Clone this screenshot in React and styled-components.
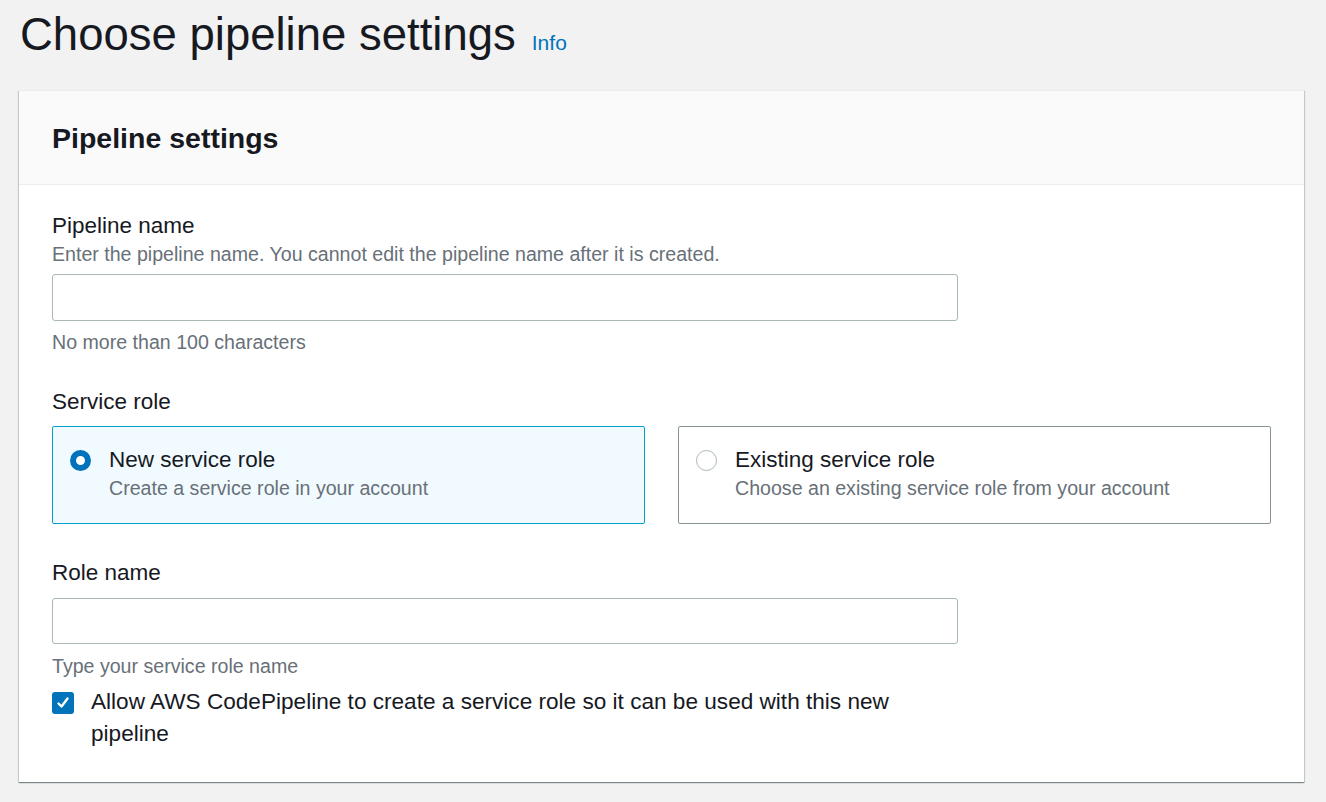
import React, { useState } from "react";
import styled, { createGlobalStyle } from "styled-components";

const GlobalStyle = createGlobalStyle`
    html, body {
        margin: 0;
        padding: 0;
        background: #f2f2f2;
    }
    body {
        font-family: "Liberation Sans", Arial, sans-serif;
        color: #16191f;
    }
    * {
        box-sizing: border-box;
    }
`;

const Page = styled.div`
    padding: 7px 22px 20px 19px;
    min-height: 802px;
`;

const TitleRow = styled.div`
    display: flex;
    align-items: baseline;
    gap: 16px;
    margin-bottom: 27px;
`;

const Title = styled.h1`
    margin: 0 0 0 1px;
    font-size: 45.5px;
    line-height: 56px;
    font-weight: 400;
    color: #16191f;
`;

const InfoLink = styled.a`
    font-size: 21px;
    color: #0073bb;
    text-decoration: none;
    cursor: pointer;
`;

const Card = styled.section`
    background: #ffffff;
    box-shadow: 0 1px 1px 0 rgba(0, 28, 36, 0.3), 1px 1px 1px 0 rgba(0, 28, 36, 0.15),
        -1px 1px 1px 0 rgba(0, 28, 36, 0.15);
`;

const CardHeader = styled.div`
    height: 95px;
    display: flex;
    align-items: center;
    padding: 0 33px;
    background: #fafafa;
    border-bottom: 1px solid #eaeded;
    border-top: 1px solid #eaeded;

    h2 {
        margin: 0;
        font-size: 28.5px;
        font-weight: 700;
        line-height: 36px;
    }
`;

const CardBody = styled.div`
    padding: 27px 33px 32px;
`;

const Field = styled.div`
    display: flex;
    flex-direction: column;
    margin-top: ${({ top }) => top || 0}px;
`;

const Label = styled.label`
    font-size: 22.5px;
    line-height: 28px;
`;

const Hint = styled.div`
    font-size: 19.6px;
    line-height: 28px;
    color: #687078;
    margin-top: ${({ top }) => top || 0}px;
`;

const TextInput = styled.input`
    width: 906px;
    height: ${({ h }) => h || 47}px;
    margin-top: ${({ top }) => top || 0}px;
    border: 1px solid #aab7b8;
    border-radius: 3px;
    background: #fff;
    padding: 0 14px;
    font: inherit;
    font-size: 20px;
    outline: none;
`;

const Tiles = styled.div`
    display: grid;
    grid-template-columns: 1fr 1fr;
    gap: 33px;
    margin-top: 10px;
`;

const Tile = styled.div`
    height: 98px;
    display: flex;
    align-items: flex-start;
    gap: 18px;
    padding: 19px 17px 0;
    border: 1px solid ${({ selected }) => (selected ? "#00a1c9" : "#879596")};
    background: ${({ selected }) => (selected ? "#f1faff" : "#ffffff")};
    border-radius: 2px;
    cursor: pointer;
`;

const Radio = styled.span`
    flex: none;
    width: 21px;
    height: 21px;
    margin-top: 4px;
    border-radius: 50%;
    border: ${({ checked }) => (checked ? "6px solid #0073bb" : "1.5px solid #aab7b8")};
    background: #fff;
`;

const TileText = styled.div`
    display: flex;
    flex-direction: column;
`;

const CheckRow = styled.div`
    display: flex;
    align-items: flex-start;
    gap: 17px;
    margin-top: 6px;
    width: 880px;
`;

const CheckBox = styled.span`
    flex: none;
    width: 22px;
    height: 22px;
    margin-top: 6px;
    border-radius: 3px;
    background: #0073bb;
    display: flex;
    align-items: center;
    justify-content: center;
`;

const CheckText = styled.span`
    font-size: 22.6px;
    line-height: 32px;
`;

const roles = [
    { id: "new", title: "New service role", desc: "Create a service role in your account" },
    { id: "existing", title: "Existing service role", desc: "Choose an existing service role from your account" },
];

const App = () => {
    const [role, setRole] = useState("new");

    return (
        <Page>
            <GlobalStyle />
            <TitleRow>
                <Title>Choose pipeline settings</Title>
                <InfoLink>Info</InfoLink>
            </TitleRow>
            <Card>
                <CardHeader>
                    <h2>Pipeline settings</h2>
                </CardHeader>
                <CardBody>
                    <Field>
                        <Label>Pipeline name</Label>
                        <Hint>Enter the pipeline name. You cannot edit the pipeline name after it is created.</Hint>
                        <TextInput top={6} />
                        <Hint top={7}>No more than 100 characters</Hint>
                    </Field>

                    <Field top={32}>
                        <Label>Service role</Label>
                        <Tiles>
                            {roles.map(r => (
                                <Tile key={r.id} selected={role === r.id} onClick={() => setRole(r.id)}>
                                    <Radio checked={role === r.id} />
                                    <TileText>
                                        <Label>{r.title}</Label>
                                        <Hint>{r.desc}</Hint>
                                    </TileText>
                                </Tile>
                            ))}
                        </Tiles>
                    </Field>

                    <Field top={35}>
                        <Label>Role name</Label>
                        <TextInput top={11} h={46} />
                        <Hint top={8}>Type your service role name</Hint>
                        <CheckRow>
                            <CheckBox>
                                <svg width="14" height="14" viewBox="0 0 14 14">
                                    <path d="M2.5 7.5 L5.5 10.5 L11.5 2.5" fill="none" stroke="#fff" strokeWidth="2.4" strokeLinecap="round" strokeLinejoin="round" />
                                </svg>
                            </CheckBox>
                            <CheckText>Allow AWS CodePipeline to create a service role so it can be used with this new pipeline</CheckText>
                        </CheckRow>
                    </Field>
                </CardBody>
            </Card>
        </Page>
    );
};

export default App;
